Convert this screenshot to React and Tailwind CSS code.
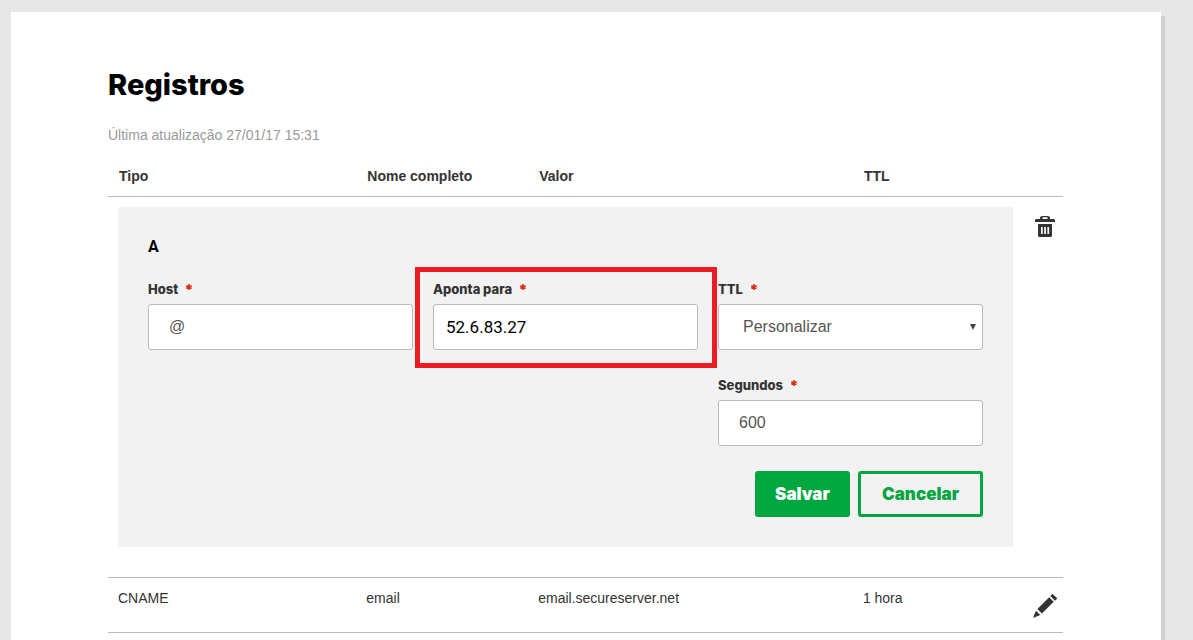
import React from "react";

const inputBase =
  "block h-[46px] w-full rounded-[3px] border border-[#bbbbbb] bg-white font-['Liberation_Sans',Arial,sans-serif] text-base text-[#555555] outline-none";

function Field({ id, label, className = "", children }) {
  return (
    <div className={className}>
      <label
        htmlFor={id}
        className="mb-[5px] flex gap-2 font-[Inter,sans-serif] text-[13px] leading-5 font-extrabold text-[#333333]"
      >
        {label}
        <Required />
      </label>
      {children}
    </div>
  );
}

function Required() {
  return (
    <svg viewBox="0 0 6 6" className="mt-[5px] size-[6px] text-[#dd2c10]" aria-hidden="true">
      <path
        d="M3 0v6M0.300 1.800l5.400 2.400M0.300 4.200l5.400-2.400"
        stroke="currentColor"
        strokeWidth="1.500"
      />
    </svg>
  );
}

function TrashIcon() {
  return (
    <svg viewBox="0 0 20 21" className="h-[21px] w-5" fill="#333333" aria-hidden="true">
      <path
        fillRule="evenodd"
        d="M7 0h6l2 1v2h4l1 1v2H0V4l1-1h4V1zM7.500 1.200V3h5V1.200z"
      />
      <path
        fillRule="evenodd"
        d="M3 8h14v12l-1 1H4l-1-1zM6 11v7h1.700v-7zM9.200 11v7h1.700v-7zM12.400 11v7h1.700v-7z"
      />
    </svg>
  );
}

function PencilIcon() {
  return (
    <svg viewBox="0 0 24 24" className="size-6" fill="#333333" aria-hidden="true">
      <path d="M20 0.200l3.800 3.800c.3.300.3.700 0 1l-1.800 1.700-4.700-4.700 1.800-1.800c.3-.3.600-.3.900 0z" />
      <path d="M16.200 3.300l4.500 4.500L8.900 19.600 4.400 15.100z" />
      <path d="M3 16.700l4.300 4.300L0 24z" />
    </svg>
  );
}

function Heading({ children }) {
  return <th className="h-[41px] pt-0 pl-[11px] text-left font-bold">{children}</th>;
}

function Cell({ children }) {
  return <td className="h-[55px] pt-[10px] pl-[10px] align-top">{children}</td>;
}

export default function App() {
  return (
    <div className="flex min-h-screen flex-col bg-[#e7e7e7] pt-3 pr-8 pl-[11px] font-['Liberation_Sans',Arial,sans-serif]">
      <main className="grow bg-white pt-[55px] pr-[98px] pl-[97px] shadow-[4px_4px_0_#d0d0d0]">
        <h1 className="font-[Inter,sans-serif] text-[29px] leading-9 font-extrabold text-black">Registros</h1>
        <p className="mt-[22px] mb-[11px] text-sm leading-5 text-[#999999]">
          Última atualização 27/01/17 15:31
        </p>

        <table className="w-full table-fixed border-separate border-spacing-0 text-sm leading-5 text-[#333333]">
          <colgroup>
            <col className="w-[26%]" />
            <col className="w-[18%]" />
            <col className="w-[34%]" />
            <col />
            <col className="w-10" />
          </colgroup>
          <thead className="[&_th]:border-b [&_th]:border-[#bbbbbb]">
            <tr>
              <Heading>Tipo</Heading>
              <Heading>Nome completo</Heading>
              <Heading>Valor</Heading>
              <Heading>TTL</Heading>
              <th aria-label="Ações" />
            </tr>
          </thead>
          <tbody className="[&_td]:border-b [&_td]:border-[#bbbbbb]">
            <tr>
              <td colSpan={4} className="px-[10px] pt-[10px] pb-[30px]">
                <form className="bg-[#f2f2f2] px-[30px] pt-7 pb-[30px]" onSubmit={(e) => e.preventDefault()}>
                  <h2 className="mb-5 font-[Roboto,sans-serif] text-base leading-6 font-bold text-black">A</h2>
                  <div className="grid grid-cols-3 gap-x-5 gap-y-[25px]">
                    <Field id="host" label="Host">
                      <input id="host" defaultValue="@" className={`${inputBase} px-5`} />
                    </Field>
                    <Field id="points-to" label="Aponta para" className="relative">
                      <input
                        id="points-to"
                        defaultValue="52.6.83.27"
                        className="block h-[46px] w-full rounded-[3px] border border-[#bbbbbb] bg-white px-3 font-[Roboto,sans-serif] text-[17px] text-black outline-none"
                      />
                      <div className="pointer-events-none absolute -top-3 -right-[19px] -bottom-[18px] -left-[18px] z-10 border-5 border-[#ed1c24]" />
                    </Field>
                    <Field id="ttl" label="TTL">
                      <div className="relative">
                        <select id="ttl" className={`${inputBase} appearance-none px-6`}>
                          <option>Personalizar</option>
                        </select>
                        <svg
                          viewBox="0 0 6 6"
                          className="pointer-events-none absolute top-5 right-[7px] size-[6px]"
                          fill="#444444"
                          aria-hidden="true"
                        >
                          <path d="M0 0h6L3 6z" />
                        </svg>
                      </div>
                    </Field>
                    <Field id="seconds" label="Segundos" className="col-start-3">
                      <input id="seconds" defaultValue="600" className={`${inputBase} px-5`} />
                    </Field>
                  </div>
                  <div className="mt-[25px] flex justify-end gap-2 font-[Inter,sans-serif] text-[17px] font-black">
                    <button type="submit" className="h-[46px] w-[95px] rounded-[3px] bg-[#00a63f] text-white">
                      Salvar
                    </button>
                    <button
                      type="button"
                      className="h-[46px] w-[125px] rounded-[3px] border-3 border-[#00a63f] text-[#00a63f]"
                    >
                      Cancelar
                    </button>
                  </div>
                </form>
              </td>
              <td className="pt-[19px] pl-3 align-top">
                <button type="button" aria-label="Excluir" className="block">
                  <TrashIcon />
                </button>
              </td>
            </tr>
            <tr>
              <Cell>CNAME</Cell>
              <Cell>email</Cell>
              <Cell>email.secureserver.net</Cell>
              <Cell>1 hora</Cell>
              <td className="pt-4 pl-[10px] align-top">
                <button type="button" aria-label="Editar" className="block">
                  <PencilIcon />
                </button>
              </td>
            </tr>
          </tbody>
        </table>
      </main>
    </div>
  );
}
